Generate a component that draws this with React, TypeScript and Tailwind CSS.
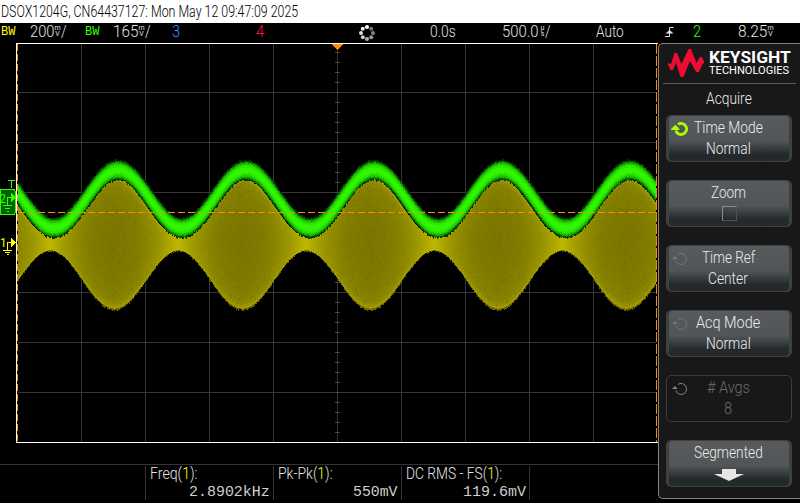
import { useLayoutEffect, useRef, useState } from "react";
import type { ReactNode } from "react";

// -------------------------------
// CONDENSED TEXT
// -------------------------------
interface FitProps {
  w: number;
  className?: string;
  children: ReactNode;
}

// squeezes its text to a fixed width, like the narrow instrument font
function Fit({ w, className = "", children }: FitProps) {
  const ref = useRef<HTMLSpanElement | null>(null);
  const [scale, setScale] = useState(1);

  useLayoutEffect(() => {
    if (!ref.current) return;
    setScale(w / ref.current.offsetWidth);
  }, [w]);

  return (
    <span className={`block shrink-0 ${className}`} style={{ width: w }}>
      <span
        ref={ref}
        className="inline-block origin-left whitespace-nowrap"
        style={{ transform: `scaleX(${scale})` }}
      >
        {children}
      </span>
    </span>
  );
}

function Unit({ top, bottom }: { top: string; bottom: string }) {
  return (
    <span className="flex w-[7px] shrink-0 flex-col items-center pt-[2px] text-[7px] leading-[6px] font-normal">
      <span>{top}</span>
      <span>{bottom}</span>
    </span>
  );
}

// -------------------------------
// STATUS BAR
// -------------------------------
const spinnerDots = [
  [8, 2, "#ffffff"],
  [12.2, 3.8, "#777777"],
  [14, 8, "#858585"],
  [12.2, 12.2, "#999999"],
  [8, 14, "#b4b4b4"],
  [3.8, 12.2, "#cccccc"],
  [2, 8, "#dddddd"],
  [3.8, 3.8, "#eeeeee"],
] as const;

function StatusBar() {
  return (
    <div className="flex h-5 bg-black text-[16.5px] leading-[18px] font-light text-[#e4e4e4]">
      <Fit w={14} className="ml-[1px] font-['Liberation_Mono',monospace] text-[12px] font-normal text-[#ffff00]">BW</Fit>
      <Fit w={24} className="ml-[15px]">200</Fit>
      <Unit top="m" bottom="V" />
      <Fit w={6}>/</Fit>
      <Fit w={14} className="ml-[18px] font-['Liberation_Mono',monospace] text-[12px] font-normal text-[#33ff00]">BW</Fit>
      <Fit w={25} className="ml-[14px]">165</Fit>
      <Unit top="m" bottom="V" />
      <Fit w={6}>/</Fit>
      <Fit w={8} className="ml-[21px] text-[#3f86ff]">3</Fit>
      <Fit w={8} className="ml-[76px] text-[#ff0a3c]">4</Fit>
      <svg className="ml-[95px] mt-[2px] size-4 shrink-0" viewBox="0 0 16 16">
        {spinnerDots.map(([x, y, fill]) => (
          <circle key={fill} cx={x} cy={y} r="2" fill={fill} />
        ))}
      </svg>
      <Fit w={26} className="ml-[55px]">0.0s</Fit>
      <Fit w={37} className="ml-[46px]">500.0</Fit>
      <Unit top="µ" bottom="s" />
      <Fit w={6} className="-ml-px">/</Fit>
      <Fit w={28} className="ml-[45px]">Auto</Fit>
      <svg className="ml-[41px] mt-[3px] h-3 w-[9px] shrink-0" viewBox="0 0 9 12" fill="none" stroke="#e4e4e4">
        <path d="M0 10.500H4.500V1.500H8.500" />
        <path d="M4.500 4L0.500 7.500H8.500Z" fill="#e4e4e4" stroke="none" />
      </svg>
      <Fit w={8} className="ml-[19px] text-[#33ff00]">2</Fit>
      <Fit w={29} className="ml-[37px]">8.25</Fit>
      <Unit top="m" bottom="V" />
    </div>
  );
}

// -------------------------------
// WAVEFORMS
// -------------------------------
const LEFT = 18;
const RIGHT = 656;
const PERIOD = 128;

function noise(n: number) {
  const v = Math.sin(n * 127.1 + 11.7) * 43758.5453;
  return v - Math.floor(v);
}

function greenY(x: number) {
  return 199 + 29 * Math.cos((2 * Math.PI * (x - 53.5)) / PERIOD);
}

function yellowAmp(x: number) {
  return 37 - 29.5 * Math.cos((2 * Math.PI * (x - 50)) / PERIOD);
}

// stepped band between two curves, one step per column
function band(top: (x: number) => number, bottom: (x: number) => number) {
  let up = "";
  let down = "";
  for (let x = LEFT; x < RIGHT; x++) {
    up += `L${x} ${top(x).toFixed(1)}H${x + 1}`;
    down = `L${x + 1} ${bottom(x).toFixed(1)}H${x}` + down;
  }
  return "M" + up.slice(1) + down + "Z";
}

// envelope glows near its edge and darkens towards the middle
const yellowLevels = [1, 0.985, 0.96, 0.94, 0.92, 0.89, 0.86, 0.82, 0.77, 0.71, 0.64, 0.55, 0.45, 0.33, 0.2];

const yellowBands = yellowLevels.map((f) => {
  const v = f === 1 ? 105 : Math.round(121 + 14 * f * f + 34 * Math.pow(f, 16));
  return {
    f,
    fill: `rgb(${v},${v - 4},0)`,
    d: band(
      (x) => 243 - yellowAmp(x) * f,
      (x) => 243 + yellowAmp(x) * f + (f === 1 ? noise(x) * 1.6 : 0)
    ),
  };
});

const greenLevels = [
  [10.2, 2.2, "#003800"],
  [8.9, 1.2, "#087000"],
  [7.8, 0.8, "#14a000"],
  [6.6, 0.4, "#20c800"],
  [5, 0, "#2ae600"],
  [2.6, 0, "#30f600"],
] as const;

function greenHalf(x: number, h: number) {
  const slope = Math.sin((2 * Math.PI * (x - 53.5)) / PERIOD);
  return h * (1 + 0.15 * slope * slope);
}

const greenBands = greenLevels.map(([h, jitter, fill], i) => ({
  fill,
  d: band(
    (x) => greenY(x) - greenHalf(x, h) + jitter * (noise(x + i * 700) - 0.5),
    (x) => greenY(x) + greenHalf(x, h) + jitter * (noise(x + i * 900 + 300) - 0.5)
  ),
}));

// short vertical specks inside the envelope
let grain = "";
for (let i = 0; i < 5000; i++) {
  const x = LEFT + Math.floor(noise(i) * (RIGHT - LEFT));
  const y = Math.round(243 + (noise(i + 9000) * 2 - 1) * yellowAmp(x) * 0.92);
  grain += `M${x + 0.5} ${y}v2`;
}

const columns = [81, 145, 209, 273, 337, 401, 465, 529, 593];
const rows = [92, 142, 192, 242, 292, 342, 392];

function Graticule() {
  return (
    <svg className="block h-[400px] w-[658px] shrink-0" viewBox="0 43 658 400" shapeRendering="crispEdges">
      <defs>
        <linearGradient id="neck" gradientUnits="userSpaceOnUse" x1="50" x2="178" y1="0" y2="0" spreadMethod="repeat">
          <stop offset="0" stopColor="#cac400" stopOpacity="0.85" />
          <stop offset="0.14" stopColor="#bcb600" stopOpacity="0.5" />
          <stop offset="0.32" stopColor="#a8a200" stopOpacity="0.15" />
          <stop offset="0.5" stopColor="#a09800" stopOpacity="0" />
          <stop offset="0.68" stopColor="#a8a200" stopOpacity="0.15" />
          <stop offset="0.86" stopColor="#bcb600" stopOpacity="0.5" />
          <stop offset="1" stopColor="#cac400" stopOpacity="0.85" />
        </linearGradient>
      </defs>

      {/* Grid */}
      {columns.map((x) => (
        <rect key={x} x={x} y="44" width="1" height="398" fill="#363636" />
      ))}
      {rows.map((y) => (
        <rect key={y} x="18" y={y} width="638" height="1" fill="#363636" />
      ))}
      {Array.from({ length: 39 }, (_, i) => (
        <rect key={i} x="335" y={52 + i * 10} width="5" height="1" fill="#444" />
      ))}

      {/* Channel 1 envelope */}
      {yellowBands.map((b) => (
        <path key={b.f} d={b.d} fill={b.fill} />
      ))}
      <path d={grain} stroke="#6a6600" strokeOpacity="0.35" />
      <path d={band((x) => 243 - yellowAmp(x) * 0.97, (x) => 243 + yellowAmp(x) * 0.97)} fill="url(#neck)" />

      {/* Channel 2 trace */}
      {greenBands.map((b) => (
        <path key={b.fill} d={b.d} fill={b.fill} />
      ))}

      {/* Frame and trigger level */}
      <path d="M18 212.500H656" stroke="#ff8c00" strokeDasharray="7 3" />
      <path d="M16 43.500H658M16.500 43V443M16 442.500H658" stroke="#fff" />
      <path d="M17.500 44V442" stroke="#ff8c00" strokeDasharray="7 3" />
      <path d="M656.500 44V442" stroke="#ff8c00" strokeDasharray="10 2" />
      <path d="M332 44H343L337.500 50Z" fill="#ff8c00" />

      {/* Channel 2 marker */}
      <path d="M0 189.500H14L15.500 191.500V212L14 214.500H0Z" fill="#006000" stroke="#2cff00" />
      <path d="M8 180.500H15M11.500 180V188" stroke="#2cff00" />
      <path d="M11 193L16 197.500L11 202Z" fill="#2cff00" />
      <path d="M11 197.500H7.500V205M3 205.500H12M5 208.500H10M7 211.500H9" stroke="#2cff00" fill="none" />
      <text x="-0.500" y="203" fontSize="13" textLength="6.500" lengthAdjust="spacingAndGlyphs" fill="#2cff00">2</text>

      {/* Channel 1 marker */}
      <path d="M11 238L16 242.500L11 247Z" fill="#ffff00" />
      <path d="M11 242.500H7.500V250M3 250.500H12M5 252.500H10M7 254.500H9" stroke="#ffff00" fill="none" />
      <text x="0" y="247" fontSize="13" textLength="6.500" lengthAdjust="spacingAndGlyphs" fill="#ffff00">1</text>
    </svg>
  );
}

// -------------------------------
// MEASUREMENTS
// -------------------------------
const measurements = [
  { name: "Freq", labelWidth: 48, value: "2.8902kHz", valueWidth: 81 },
  { name: "Pk-Pk", labelWidth: 55, value: "550mV", valueWidth: 45 },
  { name: "DC RMS - FS", labelWidth: 96, value: "119.6mV", valueWidth: 63 },
];

function Measurements() {
  return (
    <div className="mt-[21px] flex h-[39px] border-t border-[#33333a] pl-[145px] pt-px text-[#e4e4e4]">
      {measurements.map((m) => (
        <div key={m.name} className="h-[34px] w-32 border-l border-[#33333a] pl-1">
          <Fit w={m.labelWidth} className="h-[17px] text-[16.5px] leading-[16px] font-light">
            {m.name}(<span className="text-[#ffff00]">1</span>):
          </Fit>
          <div className="flex justify-end pr-[3px]">
            <Fit w={m.valueWidth} className="font-['Liberation_Mono',monospace] text-[15.5px] leading-[18px] text-[#cfcfcf]">
              {m.value}
            </Fit>
          </div>
        </div>
      ))}
      <div className="h-[34px] w-px bg-[#33333a]" />
    </div>
  );
}

// -------------------------------
// SOFTKEY PANEL
// -------------------------------
function Knob({ active, color }: { active?: boolean; color: string }) {
  return (
    <svg className="absolute left-1 top-1.5 h-4 w-[18px]" viewBox="0 0 18 16" fill="none" stroke={color}>
      <path d="M4.800 8.500A5.500 5.500 0 1 0 7 2.400" strokeWidth={active ? 2.8 : 1} />
      <path d={active ? "M0 7L4.500 2.800L8.500 7V8H0Z" : "M1 7L4 4L6.500 7Z"} fill={color} stroke="none" />
    </svg>
  );
}

interface SoftkeyProps {
  label: string;
  width: number;
  knob?: string;
  active?: boolean;
  disabled?: boolean;
  children: ReactNode;
}

function Softkey({ label, width, knob, active, disabled, children }: SoftkeyProps) {
  const look = disabled
    ? "border-[#3a3d40] text-[#6c6c6c]"
    : "border-[#3d4144] bg-linear-to-b from-[#575b5d] from-0% via-[#515557] via-55% to-[#24292c] to-85% text-[#ececec] shadow-[inset_2px_0_0_#3d4144,inset_-2px_0_0_#3d4144]";

  return (
    <div className={`relative flex h-[47px] w-[126px] shrink-0 flex-col items-center rounded-[5px] border pr-[2px] pt-px ${look}`}>
      {knob && <Knob color={knob} active={active} />}
      <Fit w={width} className="h-[21px] leading-[21px]">{label}</Fit>
      {children}
    </div>
  );
}

function Sidebar() {
  return (
    <div className="flex h-[456px] w-[142px] shrink-0 flex-col rounded-l-[5px] border-y border-l border-[#858585] bg-[#181818] pl-[7px] text-[16.5px] font-light text-[#ececec]">
      {/* Logo */}
      <div className="-ml-[3px] flex h-10 w-[133px] shrink-0 border-b border-[#5c5c5c] pl-[5px] pt-[5px]">
        <svg className="h-7 w-9 shrink-0" viewBox="0 0 36 28" fill="#ee0c34">
          <path d="M0 14L3 15L6.500 4H9L13.500 15L20.500 0H23L28.500 14L31.800 8H33.800L36 12.500V14L34.500 15L31 23H28.200L22 12L15.500 28H12.500L8 13.500L5 21H2.500L0 15.500Z" />
        </svg>
        <div className="ml-[5px] text-white">
          <Fit w={82} className="h-[15px] text-[16.5px] leading-[17px] font-bold">KEYSIGHT</Fit>
          <Fit w={80} className="text-[10.5px] leading-[14px] font-normal">TECHNOLOGIES</Fit>
        </div>
      </div>

      <Fit w={46} className="ml-[40px] h-[31px] leading-[29px]">Acquire</Fit>

      <div className="flex flex-col gap-[18px]">
        <Softkey label="Time Mode" width={69} knob="#a8ff00" active>
          <Fit w={45} className="leading-[21px]">Normal</Fit>
        </Softkey>
        <Softkey label="Zoom" width={35}>
          <span className="ml-[2px] mt-[3px] size-[15px] border border-t-[#8c8c8c] border-r-[#505254] border-b-[#505254] border-l-[#8c8c8c]" />
        </Softkey>
        <Softkey label="Time Ref" width={53} knob="#75787a">
          <Fit w={40} className="leading-[21px]">Center</Fit>
        </Softkey>
        <Softkey label="Acq Mode" width={64} knob="#75787a">
          <Fit w={45} className="leading-[21px]">Normal</Fit>
        </Softkey>
        <Softkey label="# Avgs" width={43} knob="#858585" disabled>
          <Fit w={8} className="leading-[21px]">8</Fit>
        </Softkey>
        <Softkey label="Segmented" width={69}>
          <svg className="ml-[2px] mt-[6px] h-3 w-[30px]" viewBox="0 0 30 12" fill="#e6e6e6">
            <path d="M8 0H22V5H30L15 12L0 5H8Z" />
          </svg>
        </Softkey>
      </div>
    </div>
  );
}

export default function App() {
  return (
    <div className="h-[503px] w-[800px] overflow-hidden bg-black font-[Roboto,'Liberation_Sans',sans-serif]">
      <div className="h-[23px] bg-white pl-[1px] text-[17px] leading-[23px] text-black">
        <Fit w={297} className="font-light">DSOX1204G, CN64437127: Mon May 12 09:47:09 2025</Fit>
      </div>
      <StatusBar />
      <div className="flex">
        <div className="w-[658px] shrink-0">
          <Graticule />
          <Measurements />
        </div>
        <Sidebar />
      </div>
    </div>
  );
}
